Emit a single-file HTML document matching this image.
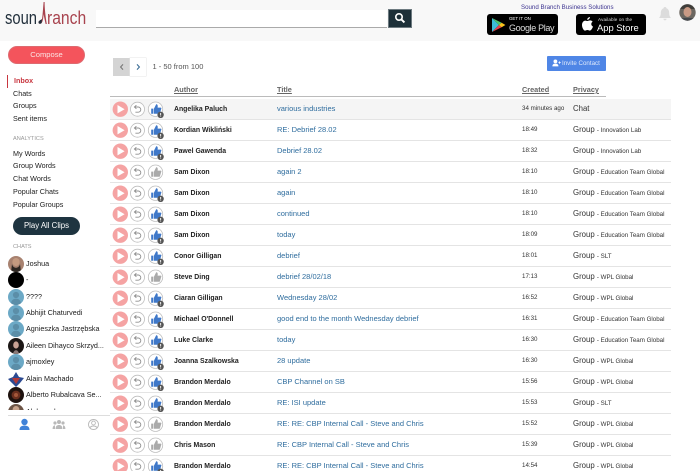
<!DOCTYPE html>
<html><head><meta charset="utf-8">
<style>
html,body{margin:0;padding:0;background:#fff}
#p{position:relative;width:700px;height:471px;overflow:hidden;font-family:"Liberation Sans",sans-serif;color:#222;background:#fff;filter:blur(.3px)}
.x{position:absolute;white-space:nowrap}
.n{position:absolute;left:13px;font-size:7.2px;line-height:10px;color:#222;white-space:nowrap}
.h{position:absolute;left:13px;font-size:5.6px;line-height:8px;color:#999;white-space:nowrap}
.th{position:absolute;top:85px;font-size:7.3px;line-height:10px;font-weight:bold;color:#666;text-decoration:underline;white-space:nowrap}
#rows{position:absolute;left:110px;top:99px;width:561px}
.r{position:relative;height:20px;border-bottom:1px solid #e4e4e4}
.r svg{position:absolute;left:0;top:0}
.r span{position:absolute;top:5px;line-height:10px;white-space:nowrap}
.r span.a{left:64px;top:6px;font-size:6.9px;font-weight:bold;color:#222}
.t{left:167px;font-size:7.5px;color:#2f6d9e}
.c{left:412px;font-size:6.2px;color:#333}
.g{left:463px;font-size:7.8px;color:#333}
.g small{font-size:6.2px}
.av{position:absolute;left:8px;width:16px;height:16px;border-radius:50%;overflow:hidden}
.cn{position:absolute;left:26px;font-size:7.2px;line-height:10px;color:#1a1a1a;white-space:nowrap}
</style></head><body>
<div id="p">
<svg width="0" height="0" style="position:absolute">
<defs>
<g id="base">
<circle cx="10.3" cy="10.2" r="7.7" fill="#f5a3a3"/>
<path d="M7.5 6 L14.6 10.2 L7.5 14.4 Z" fill="#fff"/>
<circle cx="27.5" cy="10.2" r="7" fill="#fff" stroke="#bdbdbd" stroke-width=".8"/>
<path d="M24.8 8 H28.2 A2.6 2.6 0 0 1 28.2 13.2 H25.4" fill="none" stroke="#8f8f8f" stroke-width=".9"/>
<path d="M26.4 6.2 L24.4 8 L26.4 9.8" fill="none" stroke="#8f8f8f" stroke-width=".9"/>
<circle cx="45.5" cy="10.2" r="7.2" fill="#fff" stroke="#bdbdbd" stroke-width=".8"/>
</g>
<g id="thumb"><path d="M41.2 9.6 H43.4 V14.8 H41.2 Z M44 9.6 L46.2 5.2 C47.6 5.2 48 6.4 47.6 8.6 H50.8 C51.4 8.6 51.6 9.4 51.2 10 L50 14 C49.8 14.6 49.6 14.8 49 14.8 H44 Z"/></g>
<g id="blue"><use href="#base"/><use href="#thumb" fill="#3f78c9"/><circle cx="50.6" cy="15.8" r="3.2" fill="#555"/><rect x="50.2" y="14" width=".9" height="2.2" fill="#fff"/><rect x="50.2" y="16.7" width=".9" height=".8" fill="#fff"/></g>
<g id="grey"><use href="#base"/><use href="#thumb" fill="#aaa"/></g>
<g id="pers"><rect width="16" height="16" fill="#6ca9c6"/><circle cx="8" cy="6" r="3.1" fill="#5b8ea8"/><path d="M2.8 16 C3 11 5.4 9.8 8 9.8 C10.6 9.8 13 11 13.2 16 Z" fill="#5b8ea8"/></g>
</defs>
</svg>

<!-- header -->
<div class="x" style="left:0;top:0;width:700px;height:41px;background:#f8f8f8"></div>
<div class="x" style="left:4.5px;top:8px;font-size:18px;line-height:20px;color:#22303c;transform:scaleX(.82);transform-origin:0 0">soun</div>
<div class="x" style="left:47px;top:8px;font-size:18px;line-height:20px;color:#a8434e;transform:scaleX(.87);transform-origin:0 0">ranch</div>
<svg class="x" style="left:35px;top:0" width="14" height="26"><path d="M6.6 23 C5 24.6 3 23.6 3.6 21.8 C4.2 20.2 6.4 20 7 19 C7.8 14 8 8 8.6 2 L9.6 2 C9.6 8 10.4 16 11.8 24 L10.6 24 C9.8 20 9 17 8.6 14 C8.4 18 7.8 21.6 6.6 23 Z" fill="#a8434e"/><path d="M3.6 21.8 C4.2 20.2 6.4 20 7 19 L6.6 23 C5 24.6 3 23.6 3.6 21.8 Z" fill="#22303c"/></svg>
<div class="x" style="left:96px;top:10px;width:291px;height:18px;background:#fff;border-bottom:1px solid #aaa;box-sizing:border-box"></div>
<div class="x" style="left:388px;top:9px;width:24px;height:19px;background:#1d3039;border:1px solid #6d7a80;box-sizing:border-box"></div>
<svg class="x" style="left:394px;top:12px" width="12" height="12"><circle cx="5" cy="5" r="3.2" fill="none" stroke="#fff" stroke-width="1.6"/><path d="M7.4 7.4 L10.4 10.4" stroke="#fff" stroke-width="2"/></svg>
<div class="x" style="left:521px;top:4px;font-size:6.15px;line-height:8px;color:#3d3490">Sound Branch Business Solutions</div>

<div class="x" style="left:487px;top:14px;width:71px;height:21px;background:#000;border-radius:3px"></div>
<svg class="x" style="left:491px;top:17px" width="15" height="16"><path d="M1 1 L8 8 L1 15 Z" fill="#3dbcd8"/><path d="M1 1 L10.6 5.8 L8 8 Z" fill="#4cc26c"/><path d="M1 15 L10.6 10.2 L8 8 Z" fill="#e8404c"/><path d="M10.6 5.8 L14.4 8 L10.6 10.2 L8 8 Z" fill="#f8c21c"/></svg>
<div class="x" style="left:509px;top:16px;font-size:4.4px;line-height:6px;color:#fff">GET IT ON</div>
<div class="x" style="left:509px;top:21.5px;font-size:9px;line-height:12px;color:#ddd;letter-spacing:-.35px">Google Play</div>

<div class="x" style="left:576px;top:14px;width:70px;height:21px;background:#000;border-radius:3px"></div>
<svg class="x" style="left:581px;top:16px" width="13" height="16"><path d="M9 1 C8.8 2.6 7.6 3.8 6.2 3.8 C6.2 2.4 7.4 1.2 9 1 Z M6.4 5 C7.4 5 8 4.4 9.2 4.4 C10.2 4.4 11 4.9 11.6 5.8 C9.6 7 10 9.8 12 10.6 C11.2 12.6 10 14.6 8.8 14.6 C7.8 14.6 7.4 14 6.4 14 C5.4 14 5 14.6 4 14.6 C2.6 14.6 1 11.6 1 9 C1 6.2 2.8 4.6 4.4 4.6 C5.2 4.6 5.8 5 6.4 5 Z" fill="#fff"/></svg>
<div class="x" style="left:598px;top:16.5px;font-size:4.6px;line-height:6px;color:#ddd;letter-spacing:.1px">Available on the</div>
<div class="x" style="left:597px;top:21.5px;font-size:9.4px;line-height:12px;color:#fff">App Store</div>

<svg class="x" style="left:658px;top:6px" width="14" height="15"><path d="M7 1 C8 1 8.4 1.6 8.4 2.2 C10.6 3 11.2 5 11.2 7 C11.2 9.6 12 11 13 12 H1 C2 11 2.8 9.6 2.8 7 C2.8 5 3.4 3 5.6 2.2 C5.6 1.6 6 1 7 1 Z M5.4 12.8 H8.6 C8.4 14 7.8 14.4 7 14.4 C6.2 14.4 5.6 14 5.4 12.8 Z" fill="#dcdcdc"/></svg>
<svg class="x" style="left:679px;top:4px" width="17" height="17"><defs><clipPath id="ca"><circle cx="8.5" cy="8.5" r="8.2"/></clipPath></defs><g clip-path="url(#ca)"><rect width="17" height="17" fill="#6b6660"/><rect y="0" width="17" height="5" fill="#3f3d3a"/><ellipse cx="8.5" cy="8" rx="4" ry="5" fill="#c99a85"/><rect y="14" width="17" height="3" fill="#45484c"/></g></svg>

<!-- sidebar -->
<div class="x" style="left:8px;top:46px;width:77px;height:18px;border-radius:9px;background:#f4545c;border:1px solid #dd6a70;box-sizing:border-box;color:#fbe3e3;font-size:7.6px;line-height:15px;text-align:center">Compose</div>
<div class="x" style="left:7px;top:75px;width:1.4px;height:13px;background:#c8363f"></div>
<div class="n" style="left:14px;top:76px;color:#c8363f;font-weight:bold">Inbox</div>
<div class="n" style="top:89px">Chats</div>
<div class="n" style="top:101px">Groups</div>
<div class="n" style="top:114px">Sent items</div>
<div class="h" style="top:135px">ANALYTICS</div>
<div class="n" style="top:149px">My Words</div>
<div class="n" style="top:161px">Group Words</div>
<div class="n" style="top:174px">Chat Words</div>
<div class="n" style="top:187px">Popular Chats</div>
<div class="n" style="top:200px">Popular Groups</div>
<div class="x" style="left:13px;top:217px;width:67px;height:18px;border-radius:9px;background:#1e3440;color:#fff;font-size:7.8px;line-height:17px;text-align:center">Play All Clips</div>
<div class="h" style="top:243px">CHATS</div>

<div class="x" style="left:0;top:250px;width:110px;height:160px;overflow:hidden" id="cl">
<svg class="av" style="top:6px" viewBox="0 0 16 16"><rect width="16" height="16" fill="#a88270"/><ellipse cx="8" cy="6" rx="3.6" ry="4" fill="#c49a80"/><path d="M4 8 C5 13 11 13 12 8 L13 16 H3 Z" fill="#2c2622"/></svg>
<div class="cn" style="top:9px">Joshua</div>
<div class="av" style="top:22px;background:#000"></div>
<div class="cn" style="top:25px">-</div>
<svg class="av" style="top:38.5px" viewBox="0 0 16 16"><use href="#pers"/></svg>
<div class="cn" style="top:41.5px">????</div>
<svg class="av" style="top:55px" viewBox="0 0 16 16"><use href="#pers"/></svg>
<div class="cn" style="top:58px">Abhijit Chaturvedi</div>
<svg class="av" style="top:71px" viewBox="0 0 16 16"><use href="#pers"/></svg>
<div class="cn" style="top:74px">Agnieszka Jastrzębska</div>
<svg class="av" style="top:88px" viewBox="0 0 16 16"><rect width="16" height="16" fill="#1c1716"/><ellipse cx="8" cy="7" rx="2.8" ry="3.6" fill="#c9a294"/><path d="M5 16 C5.6 11 10.4 11 11 16 Z" fill="#8a7a78"/></svg>
<div class="cn" style="top:91px">Aileen Dihayco Skrzyd...</div>
<svg class="av" style="top:104px" viewBox="0 0 16 16"><use href="#pers"/></svg>
<div class="cn" style="top:107px">ajmoxley</div>
<svg class="av" style="top:120.5px" viewBox="0 0 16 16"><rect width="16" height="16" fill="#fff"/><path d="M0 8 L5 6 L8 1 L11 6 L16 7 L12 12 L8 16 L4 12 Z" fill="#2c4a92"/><path d="M4 7 H12 L8 13 Z" fill="#b23a3a"/></svg>
<div class="cn" style="top:123.5px">Alain Machado</div>
<svg class="av" style="top:137px" viewBox="0 0 16 16"><rect width="16" height="16" fill="#1e120e"/><ellipse cx="8" cy="8" rx="4.4" ry="4.4" fill="#6a2f1e"/><ellipse cx="8" cy="8" rx="2" ry="2" fill="#a4583a"/></svg>
<div class="cn" style="top:140px">Alberto Rubalcava Se...</div>
<svg class="av" style="top:153.5px" viewBox="0 0 16 16"><rect width="16" height="16" fill="#6d5546"/><ellipse cx="8" cy="6" rx="3.4" ry="4" fill="#c8a48c"/></svg>
<div class="cn" style="top:156.5px">Aleksandr</div>
</div>
<div class="x" style="left:8px;top:415px;width:102px;height:1px;background:#ddd"></div>
<svg class="x" style="left:18px;top:418px" width="13" height="13"><circle cx="6.5" cy="4" r="3.2" fill="#3f82d8"/><path d="M1.5 12 C1.5 8.6 3.6 7.6 6.5 7.6 C9.4 7.6 11.5 8.6 11.5 12 Z" fill="#3f82d8"/></svg>
<svg class="x" style="left:52px;top:419px" width="14" height="11" fill="#b9b9b9"><circle cx="7" cy="3" r="2"/><circle cx="3" cy="4" r="1.6"/><circle cx="11" cy="4" r="1.6"/><path d="M3.6 10 C3.6 7 5 6 7 6 C9 6 10.4 7 10.4 10 Z"/><path d="M.6 10 C.6 7.6 1.6 6.4 3 6.4 L3 10 Z M13.4 10 C13.4 7.6 12.4 6.4 11 6.4 L11 10 Z"/></svg>
<svg class="x" style="left:87px;top:418px" width="13" height="13" fill="none" stroke="#b9b9b9" stroke-width=".9"><circle cx="6.5" cy="6.5" r="5"/><circle cx="6.5" cy="5" r="1.9"/><path d="M2.8 10 C3.6 8.4 5 8 6.5 8 C8 8 9.4 8.4 10.2 10"/></svg>

<!-- toolbar -->
<div class="x" style="left:113px;top:58px;width:17px;height:18px;background:#d4d4d4"></div>
<div class="x" style="left:130px;top:58px;width:16px;height:18px;background:#fff;box-shadow:0 0 0 .5px #e6e6e6"></div>
<svg class="x" style="left:119px;top:63px" width="6" height="8"><path d="M4 1.4 L1.6 4 L4 6.6" fill="none" stroke="#777" stroke-width="1.1"/></svg>
<svg class="x" style="left:135px;top:63px" width="6" height="8"><path d="M2 1.4 L4.4 4 L2 6.6" fill="none" stroke="#3c6d96" stroke-width="1.1"/></svg>
<div class="x" style="left:152.5px;top:62px;font-size:7.5px;line-height:10px;color:#555">1 - 50 from 100</div>
<div class="x" style="left:547px;top:56px;width:59px;height:15px;background:#4f86e6;border-radius:1px"></div>
<svg class="x" style="left:552px;top:59px" width="9" height="8" fill="#fff"><circle cx="3.4" cy="2.4" r="1.9"/><path d="M.4 7.4 C.4 5.2 1.6 4.6 3.4 4.6 C5.2 4.6 6.4 5.2 6.4 7.4 Z"/><path d="M6.4 3.2 H8.8 V4 H6.4 Z M7.2 2.4 H8 V4.8 H7.2 Z"/></svg>
<div class="x" style="left:562px;top:58.5px;font-size:6.2px;line-height:10px;color:#dfe9fb">Invite Contact</div>

<div class="th" style="left:174px">Author</div>
<div class="th" style="left:277px">Title</div>
<div class="th" style="left:522px">Created</div>
<div class="th" style="left:573px">Privacy</div>
<div class="x" style="left:110px;top:96px;width:496px;height:1px;background:#bbb"></div>

<div id="rows">
<div class="r" style="background:#f5f5f5"><svg width="64" height="21"><use href="#blue"/></svg><span class="a">Angelika Paluch</span><span class="t">various industries</span><span class="c">34 minutes ago</span><span class="g">Chat</span></div>
<div class="r"><svg width="64" height="21"><use href="#blue"/></svg><span class="a">Kordian Wikliński</span><span class="t">RE: Debrief 28.02</span><span class="c">18:49</span><span class="g">Group <small>- Innovation Lab</small></span></div>
<div class="r"><svg width="64" height="21"><use href="#blue"/></svg><span class="a">Pawel Gawenda</span><span class="t">Debrief 28.02</span><span class="c">18:32</span><span class="g">Group <small>- Innovation Lab</small></span></div>
<div class="r"><svg width="64" height="21"><use href="#grey"/></svg><span class="a">Sam Dixon</span><span class="t">again 2</span><span class="c">18:10</span><span class="g">Group <small>- Education Team Global</small></span></div>
<div class="r"><svg width="64" height="21"><use href="#blue"/></svg><span class="a">Sam Dixon</span><span class="t">again</span><span class="c">18:10</span><span class="g">Group <small>- Education Team Global</small></span></div>
<div class="r"><svg width="64" height="21"><use href="#blue"/></svg><span class="a">Sam Dixon</span><span class="t">continued</span><span class="c">18:10</span><span class="g">Group <small>- Education Team Global</small></span></div>
<div class="r"><svg width="64" height="21"><use href="#blue"/></svg><span class="a">Sam Dixon</span><span class="t">today</span><span class="c">18:09</span><span class="g">Group <small>- Education Team Global</small></span></div>
<div class="r"><svg width="64" height="21"><use href="#blue"/></svg><span class="a">Conor Gilligan</span><span class="t">debrief</span><span class="c">18:01</span><span class="g">Group <small>- SLT</small></span></div>
<div class="r"><svg width="64" height="21"><use href="#grey"/></svg><span class="a">Steve Ding</span><span class="t">debrief 28/02/18</span><span class="c">17:13</span><span class="g">Group <small>- WPL Global</small></span></div>
<div class="r"><svg width="64" height="21"><use href="#blue"/></svg><span class="a">Ciaran Gilligan</span><span class="t">Wednesday 28/02</span><span class="c">16:52</span><span class="g">Group <small>- WPL Global</small></span></div>
<div class="r"><svg width="64" height="21"><use href="#blue"/></svg><span class="a">Michael O'Donnell</span><span class="t">good end to the month Wednesday debrief</span><span class="c">16:31</span><span class="g">Group <small>- Education Team Global</small></span></div>
<div class="r"><svg width="64" height="21"><use href="#blue"/></svg><span class="a">Luke Clarke</span><span class="t">today</span><span class="c">16:30</span><span class="g">Group <small>- Education Team Global</small></span></div>
<div class="r"><svg width="64" height="21"><use href="#blue"/></svg><span class="a">Joanna Szalkowska</span><span class="t">28 update</span><span class="c">16:30</span><span class="g">Group <small>- WPL Global</small></span></div>
<div class="r"><svg width="64" height="21"><use href="#blue"/></svg><span class="a">Brandon Merdalo</span><span class="t">CBP Channel on SB</span><span class="c">15:56</span><span class="g">Group <small>- WPL Global</small></span></div>
<div class="r"><svg width="64" height="21"><use href="#blue"/></svg><span class="a">Brandon Merdalo</span><span class="t">RE: ISI update</span><span class="c">15:53</span><span class="g">Group <small>- SLT</small></span></div>
<div class="r"><svg width="64" height="21"><use href="#grey"/></svg><span class="a">Brandon Merdalo</span><span class="t">RE: RE: CBP Internal Call - Steve and Chris</span><span class="c">15:52</span><span class="g">Group <small>- WPL Global</small></span></div>
<div class="r"><svg width="64" height="21"><use href="#grey"/></svg><span class="a">Chris Mason</span><span class="t">RE: CBP Internal Call - Steve and Chris</span><span class="c">15:39</span><span class="g">Group <small>- WPL Global</small></span></div>
<div class="r"><svg width="64" height="21"><use href="#blue"/></svg><span class="a">Brandon Merdalo</span><span class="t">RE: RE: CBP Internal Call - Steve and Chris</span><span class="c">14:54</span><span class="g">Group <small>- WPL Global</small></span></div>
</div>
</div>
</body></html>
